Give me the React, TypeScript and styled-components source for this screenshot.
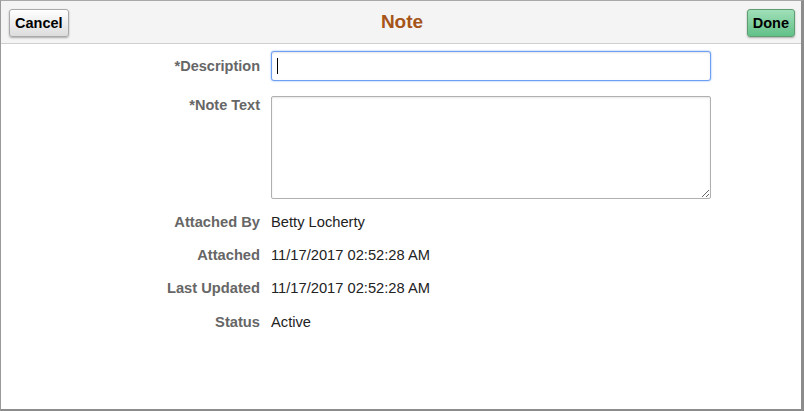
import React from "react";
import styled, { createGlobalStyle } from "styled-components";

const GlobalStyle = createGlobalStyle`
  html, body {
    margin: 0;
    padding: 0;
    background: #ffffff;
    font-family: "Liberation Sans", Arial, sans-serif;
  }
`;

interface Detail {
  label: string;
  value: string;
}

const details: Detail[] = [
  { label: "Attached By", value: "Betty Locherty" },
  { label: "Attached", value: "11/17/2017 02:52:28 AM" },
  { label: "Last Updated", value: "11/17/2017 02:52:28 AM" },
  { label: "Status", value: "Active" },
];

const App = () => {
  return (
    <>
      <GlobalStyle />
      <Frame>
        <Header>
          <Button>Cancel</Button>
          <Title>Note</Title>
          <Button $primary>Done</Button>
        </Header>
        <Form>
          <Fields>
            <Label htmlFor="desc">*Description</Label>
            <InputWrap>
              <TextInput id="desc" type="text" />
              <Caret />
            </InputWrap>
            <Label htmlFor="note" $top>
              *Note Text
            </Label>
            <TextArea id="note" />
          </Fields>
          <Details>
            {details.map((d) => (
              <DetailRow key={d.label}>
                <DetailLabel>{d.label}</DetailLabel>
                <DetailValue>{d.value}</DetailValue>
              </DetailRow>
            ))}
          </Details>
        </Form>
      </Frame>
    </>
  );
};

export default App;

const Frame = styled.div`
  box-sizing: border-box;
  width: 804px;
  height: 411px;
  border-top: 1px solid #a8a8a8;
  border-left: 1px solid #9a9a9a;
  border-right: 3px solid #8c8c8c;
  border-bottom: 2px solid #8c8c8c;
  background: #ffffff;
  display: flex;
  flex-direction: column;
`;
const Header = styled.div`
  box-sizing: border-box;
  height: 43px;
  background: #f4f4f4;
  border-bottom: 1px solid #cfcfcf;
  display: grid;
  grid-template-columns: 1fr auto 1fr;
  align-items: center;
  padding: 0 6px 0 8px;
  & > button:last-child {
    justify-self: end;
  }
  & > button:first-child {
    justify-self: start;
  }
`;
const Title = styled.h1`
  margin: 0;
  font-size: 19px;
  font-weight: bold;
  color: #a5541a;
`;
const Button = styled.button<{ $primary?: boolean }>`
  box-sizing: border-box;
  height: 28px;
  margin: 2px 0 0;
  padding: 0 5px;
  font-family: "Liberation Sans", Arial, sans-serif;
  font-size: 14.5px;
  font-weight: bold;
  color: #000000;
  border-radius: 3px;
  border: 1px solid ${({ $primary }) => ($primary ? "#5d9d70" : "#a9a9a9")};
  background: ${({ $primary }) =>
    $primary
      ? "linear-gradient(#a0e0b8, #62c088)"
      : "linear-gradient(#ffffff, #dcdcdc)"};
  box-shadow: 0 1px 2px rgba(0, 0, 0, 0.3);
`;
const Form = styled.div`
  display: flex;
  flex-direction: column;
  padding-top: 7px;
`;
const Fields = styled.div`
  display: grid;
  grid-template-columns: 259px 440px;
  column-gap: 11px;
  row-gap: 15px;
`;
const Label = styled.label<{ $top?: boolean }>`
  justify-self: end;
  align-self: ${({ $top }) => ($top ? "start" : "center")};
  padding-top: ${({ $top }) => ($top ? "1px" : "0")};
  font-size: 14.5px;
  font-weight: bold;
  color: #666666;
`;
const InputWrap = styled.div`
  position: relative;
  height: 30px;
`;
const TextInput = styled.input`
  box-sizing: border-box;
  height: 30px;
  width: 440px;
  padding: 0 5px;
  font-family: "Liberation Sans", Arial, sans-serif;
  font-size: 14px;
  color: #000;
  border: 1px solid #6f9ff2;
  border-radius: 3px;
  box-shadow: 0 0 2px #7aa7f2, inset 0 1px 2px rgba(0, 0, 0, 0.1);
  outline: none;
`;
const Caret = styled.span`
  position: absolute;
  left: 6px;
  top: 7px;
  width: 1px;
  height: 16px;
  background: #000000;
`;
const TextArea = styled.textarea`
  box-sizing: border-box;
  width: 440px;
  height: 103px;
  border: 1px solid #b0b0b0;
  border-radius: 2px;
  box-shadow: inset 0 1px 2px rgba(0, 0, 0, 0.1);
  outline: none;
  font-family: "Liberation Sans", Arial, sans-serif;
  font-size: 14px;
`;
const Details = styled.div`
  display: flex;
  flex-direction: column;
  padding-top: 6px;
`;
const DetailRow = styled.div`
  display: grid;
  grid-template-columns: 259px auto;
  column-gap: 11px;
  height: 33.4px;
  align-items: center;
  font-size: 14.7px;
`;
const DetailLabel = styled.span`
  justify-self: end;
  font-weight: bold;
  color: #666666;
`;
const DetailValue = styled.span`
  color: #222222;
`;
